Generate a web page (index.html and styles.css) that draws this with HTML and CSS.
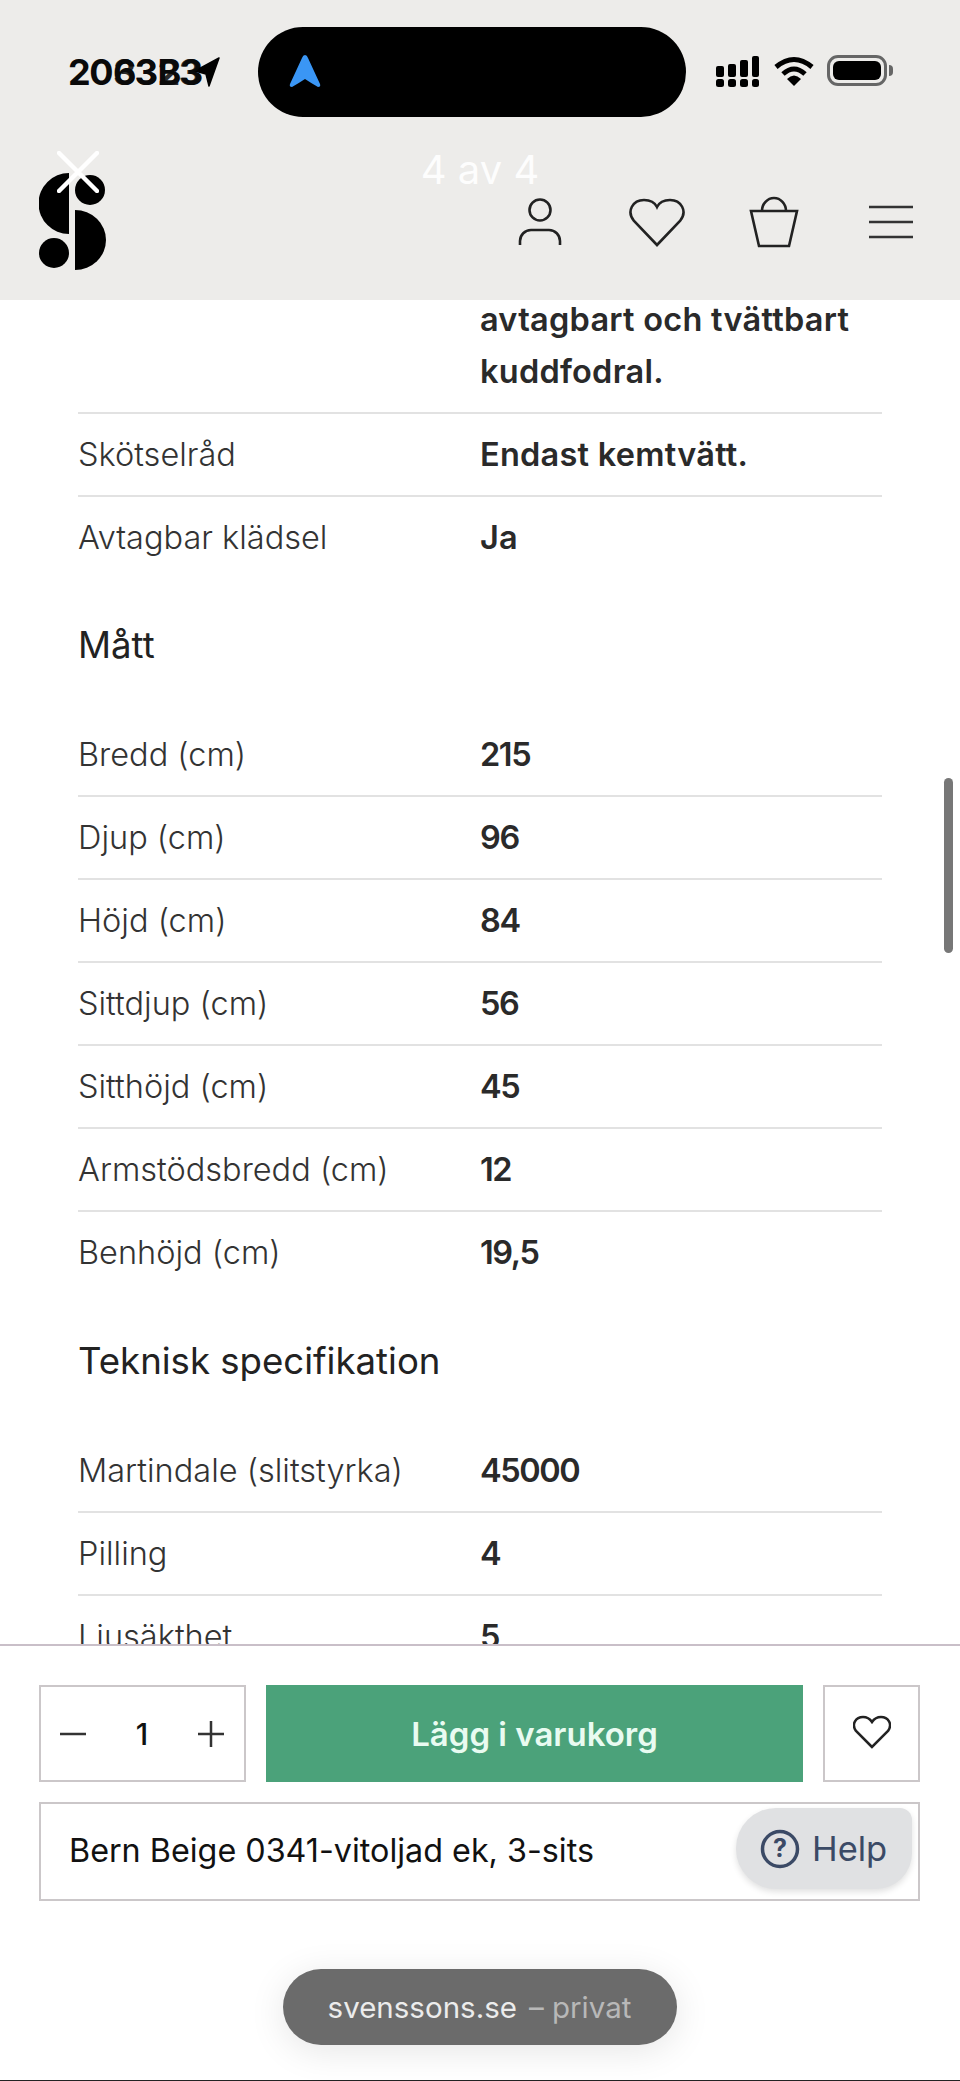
FILE: index.html
```html
<!DOCTYPE html>
<html lang="sv">
<head>
<meta charset="utf-8">
<title>Svenssons</title>
<link rel="stylesheet" href="styles.css">
</head>
<body>
<div class="screen">
  <header class="top">
    <div class="status">
      <div class="time">
        <span class="t-run">20</span>
        <span class="t-stack"><span>63</span><span class="t-over">33</span></span>
        <span class="t-stack"><span>B3</span><span class="t-over">23</span></span>
        <svg class="t-arrow" width="26" height="30" viewBox="0 0 26 30"><path d="M25 1 L1 14 L12 17 L15 29 Z" fill="#000" stroke="#000" stroke-width="1.5" stroke-linejoin="round"/></svg>
      </div>
      <div class="notch">
        <svg width="32" height="34" viewBox="0 0 32 34"><path d="M16 1 Q18 1 19 4 L31 30 Q32 33 29 33 Q22 29 16 25 Q10 29 3 33 Q0 33 1 30 L13 4 Q14 1 16 1 Z" fill="#3a96f5"/></svg>
      </div>
      <div class="sys">
        <svg width="46" height="32" viewBox="0 0 46 32"><g fill="#000"><rect x="1" y="11" width="8" height="11" rx="2"/><rect x="13" y="9" width="8" height="13" rx="2"/><rect x="25" y="5" width="8" height="17" rx="2"/><rect x="37" y="1" width="7" height="21" rx="2"/><rect x="1" y="24" width="8" height="8" rx="2.5"/><rect x="13" y="24" width="8" height="8" rx="2.5"/><rect x="25" y="24" width="8" height="8" rx="2.5"/><rect x="37" y="24" width="7" height="8" rx="2.5"/></g></svg>
        <svg class="wifi" width="40" height="30" viewBox="0 0 40 30"><path d="M2 11 Q20 -4 38 11" fill="none" stroke="#000" stroke-width="5"/><path d="M9 18 Q20 8 31 18" fill="none" stroke="#000" stroke-width="5"/><path d="M13 23 Q20 16 27 23 L20 30 Z" fill="#000"/></svg>
        <div class="battery"><div class="battery-fill"></div><div class="battery-nub"></div></div>
      </div>
    </div>
    <nav class="nav">
      <svg class="logo" width="68" height="98" viewBox="0 0 68 98"><g fill="#000"><path d="M30 1 A30 30 0 0 0 30 62 Z"/><circle cx="51" cy="18" r="15"/><circle cx="15" cy="81" r="15"/><path d="M36 38 A31 30 0 0 1 36 98 Z"/></g></svg>
      <div class="nav-icons">
        <svg class="ico" width="60" height="60" viewBox="0 0 60 60"><circle cx="30" cy="15" r="10.5"/><path d="M10 50 V46 A11 11 0 0 1 21 35 H39 A11 11 0 0 1 50 46 V50"/></svg>
        <svg class="ico" width="60" height="60" viewBox="0 0 60 60"><path d="M30 50 L7 26 C-1 16 6 5 17 5 C23 5 28 8 30 12 C32 8 37 5 43 5 C54 5 61 16 53 26 Z"/></svg>
        <svg class="ico" width="60" height="60" viewBox="0 0 60 60"><path d="M7 16 H53 L45 51 H15 Z"/><path d="M18 16 A12 13 0 0 1 42 16"/></svg>
        <svg class="ico ico-thin" width="60" height="60" viewBox="0 0 60 60"><path d="M8 12 H52 M8 27 H52 M8 42 H52"/></svg>
      </div>
    </nav>
    <svg class="close" width="42" height="42" viewBox="0 0 42 42"><path d="M2 2 L40 40 M40 2 L2 40" stroke="#fff" stroke-width="4.5" stroke-linecap="round" fill="none"/></svg>
    <div class="counter">4 av 4</div>
  </header>

  <main class="content">
    <div class="specs">
      <div class="row row-lined"><div class="k"></div><div class="v">avtagbart och tvättbart kuddfodral.</div></div>
      <div class="row row-lined"><div class="k">Skötselråd</div><div class="v">Endast kemtvätt.</div></div>
      <div class="row"><div class="k">Avtagbar klädsel</div><div class="v">Ja</div></div>
      <h2 class="heading">Mått</h2>
      <div class="row row-lined"><div class="k">Bredd (cm)</div><div class="v num">215</div></div>
      <div class="row row-lined"><div class="k">Djup (cm)</div><div class="v num">96</div></div>
      <div class="row row-lined"><div class="k">Höjd (cm)</div><div class="v num">84</div></div>
      <div class="row row-lined"><div class="k">Sittdjup (cm)</div><div class="v num">56</div></div>
      <div class="row row-lined"><div class="k">Sitthöjd (cm)</div><div class="v num">45</div></div>
      <div class="row row-lined"><div class="k">Armstödsbredd (cm)</div><div class="v num">12</div></div>
      <div class="row"><div class="k">Benhöjd (cm)</div><div class="v num">19,5</div></div>
      <h2 class="heading heading-tall">Teknisk specifikation</h2>
      <div class="row row-lined"><div class="k">Martindale (slitstyrka)</div><div class="v num">45000</div></div>
      <div class="row row-lined"><div class="k">Pilling</div><div class="v num">4</div></div>
      <div class="row"><div class="k">Ljusäkthet</div><div class="v num">5</div></div>
    </div>
    <div class="scrollbar"></div>
  </main>

  <footer class="buy">
    <div class="buy-row">
      <div class="qty">
        <svg class="thin" width="28" height="28" viewBox="0 0 28 28"><path d="M1 14 H27"/></svg>
        <span class="qty-n">1</span>
        <svg class="thin" width="28" height="28" viewBox="0 0 28 28"><path d="M1 14 H27 M14 1 V27"/></svg>
      </div>
      <button class="add">Lägg i varukorg</button>
      <div class="fav"><svg class="fav-ico" width="38" height="34" viewBox="0 0 38 34"><path d="M19 32 L3 16 C-2 9 3 2 10 2 C14 2 17 4 19 7 C21 4 24 2 28 2 C35 2 40 9 35 16 Z"/></svg></div>
    </div>
    <div class="variant">
      <span>Bern Beige 0341-vitoljad ek, 3-sits</span>
      <div class="help">
        <svg width="40" height="40" viewBox="0 0 40 40"><circle cx="20" cy="20" r="17.5" fill="none" stroke="#3b4a66" stroke-width="3.5"/><text class="help-q" x="20" y="28" text-anchor="middle">?</text></svg>
        <span>Help</span>
      </div>
    </div>
    <div class="pill"><span class="pill-a">svenssons.se</span><span class="pill-b">– privat</span></div>
  </footer>
</div>
</body>
</html>
```
FILE: styles.css
```css
* { box-sizing: border-box; }
html, body { margin: 0; padding: 0; }
body { width: 960px; height: 2081px; overflow: hidden; background: #fff; font-family: "Inter", "Liberation Sans", sans-serif; color: #2a2a2a; }
.screen { width: 960px; height: 2081px; display: flex; flex-direction: column; position: relative; overflow: hidden; }

.top { height: 300px; background: #edecea; position: relative; flex: none; }
.status { height: 144px; padding-top: 27px; display: flex; align-items: flex-start; }
.time { width: 258px; height: 90px; padding-left: 68px; display: flex; align-items: center; font-size: 36px; font-weight: 700; color: #0a0a0a; letter-spacing: -1.5px; }
.t-stack { display: inline-grid; margin-left: 1px; }
.t-stack > span { grid-area: 1 / 1; }
.t-over { opacity: .85; }
.t-arrow { margin-left: -8px; }
.notch { width: 428px; height: 90px; background: #000; border-radius: 45px; padding: 27px 0 0 31px; }
.notch svg { display: block; }
.sys { flex: 1; height: 90px; padding-left: 29px; display: flex; align-items: flex-start; padding-top: 28px; gap: 13px; }
.wifi { margin-top: 1px; }
.battery { width: 60px; height: 31px; border: 3px solid #666; border-radius: 11px; padding: 3px; position: relative; margin-left: 0; }
.battery-fill { height: 100%; background: #000; border-radius: 6px; }
.battery-nub { position: absolute; right: -9px; top: 7px; width: 4px; height: 11px; background: #666; border-radius: 0 4px 4px 0; }

.nav { height: 156px; padding: 0 11px 0 39px; display: flex; align-items: center; justify-content: space-between; }
.logo { display: block; margin-top: -2px; }
.nav-icons { display: grid; grid-template-columns: repeat(4, 117px); justify-items: center; padding-top: 5px; }
.ico { fill: none; stroke: #222; stroke-width: 2.6; display: block; }
.ico-thin { stroke-width: 2.4; stroke: #333; }
.close { position: absolute; left: 57px; top: 151px; }
.counter { position: absolute; left: 0; right: 0; top: 146px; text-align: center; color: #fff; font-size: 40px; font-weight: 400; line-height: 48px; opacity: .92; }

.content { flex: 1; min-height: 0; overflow: hidden; position: relative; padding: 0 78px; }
.specs { margin-top: -21px; }
.row { display: grid; grid-template-columns: 402px 1fr; padding: 15px 0 16px; font-size: 32.5px; line-height: 52px; }
.row-lined { border-bottom: 2px solid #e2e2e2; padding-bottom: 14px; }
.k { font-weight: 300; color: #333; }
.v { font-weight: 600; color: #2a2a2a; letter-spacing: .25px; }
.num { letter-spacing: -1.4px; }
.heading { margin: 0; height: 134px; padding-top: 43px; font-size: 36.6px; line-height: 44px; font-weight: 420; color: #222; }
.heading-tall { height: 135px; padding-top: 44px; }
.scrollbar { position: absolute; right: 7px; top: 478px; width: 9px; height: 175px; background: #777; border-radius: 5px; }

.buy { height: 437px; flex: none; border-top: 2px solid #c9bfc8; border-bottom: 1px solid #222; padding: 39px 40px 0 39px; background: #fff; }
.buy-row { display: flex; gap: 20px; height: 97px; }
.qty { width: 207px; border: 2px solid #cbc7c9; display: flex; align-items: center; justify-content: space-between; padding: 0 19px 0 18px; }
.qty-n { font-size: 30px; font-weight: 500; color: #111; }
.thin { stroke: #333; stroke-width: 2.5; fill: none; display: block; }
.add { flex: 1; border: 0; background: #4ba27a; color: #e9fbf1; font-family: inherit; font-size: 33px; font-weight: 600; padding: 0; }
.fav { width: 97px; border: 2px solid #cbc7c9; display: flex; align-items: center; justify-content: center; }
.fav-ico { fill: none; stroke: #222; stroke-width: 2.5; display: block; margin-top: -3px; }
.variant { margin-top: 20px; height: 99px; border: 2px solid #cbc7c9; padding: 0 0 3px 28px; display: flex; align-items: center; font-size: 32.3px; font-weight: 400; color: #111; position: relative; }
.help { position: absolute; right: 6px; top: 4px; width: 176px; height: 81px; background: #e0e1e3; border-radius: 40px 12px 36px 40px; box-shadow: 0 3px 6px rgba(0,0,0,.12); display: flex; align-items: center; padding-left: 24px; gap: 12px; color: #3b4a66; font-size: 34.5px; font-weight: 400; }
.help-q { font-family: "Inter", sans-serif; font-size: 25px; font-weight: 700; fill: #3b4a66; }
.pill { margin: 68px auto 0; width: 394px; height: 76px; border-radius: 38px; background: #6b6b6b; display: flex; align-items: center; justify-content: center; gap: 12px; font-size: 29.5px; box-shadow: 0 6px 36px rgba(0,0,0,.1); }
.pill-a { color: #ececec; }
.pill-b { color: #b8b8b8; }
```
